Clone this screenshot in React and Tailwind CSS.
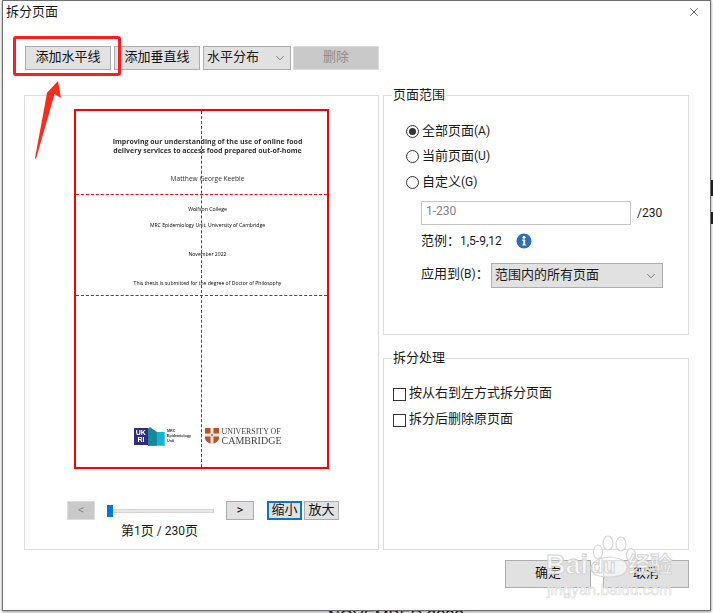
import { X, ChevronDown } from 'lucide-react';

const tones = {
  normal: 'border border-[#adadad] bg-[#e1e1e1] text-[#111]',
  disabled: 'border border-[#dcdcdc] bg-[#c9c9c9] text-[#8e8e8e]',
  focus: 'border-2 border-[#0078d7] bg-[#e1e1e1] text-[#111]',
};

function Btn({ children, tone = 'normal', className = '' }) {
  return (
    <button className={`flex items-center justify-center pb-[2px] text-[13px] ${tones[tone]} ${className}`}>
      {children}
    </button>
  );
}

function Radio({ checked, label, hotkey, className = '' }) {
  return (
    <div className={`flex h-5 items-center gap-[3px] ${className}`}>
      <span className="flex h-[13px] w-[13px] items-center justify-center rounded-full border border-[#333] bg-white">
        {checked && <span className="h-[7px] w-[7px] rounded-full bg-[#333]" />}
      </span>
      <span>{label}<span className="text-[12px]">{hotkey}</span></span>
    </div>
  );
}

function Check({ label, className = '' }) {
  return (
    <div className={`flex h-5 items-center gap-[3px] ${className}`}>
      <span className="h-[13px] w-[13px] border border-[#333] bg-white" />
      <span className="pb-[2px]">{label}</span>
    </div>
  );
}

function Group({ title, className = '', children }) {
  return (
    <div className={`border border-[#dcdcdc] ${className}`}>
      <div className="ml-2 -mt-[11px] h-5 w-fit bg-white px-px leading-5">{title}</div>
      {children}
    </div>
  );
}

// thesis title page shown in the preview
function PagePreview() {
  return (
    <div className="relative ml-[49px] h-[360px] w-[255px] border-2 border-[#ff0000]">
      <div className="flex h-full flex-col items-center pl-[12px] font-['Open_Sans',sans-serif] text-[#222] blur-[0.3px]">
        <div className="mt-[26px] text-center text-[7px] font-bold leading-[9px] text-[#333]">
          <div>Improving our understanding of the use of online food</div>
          <div>delivery services to access food prepared out-of-home</div>
        </div>
        <div className="mt-[19px] text-[6.6px] leading-[10px] text-[#333]">Matthew George Keeble</div>
        <div className="mt-[21px] text-[5.2px] font-medium leading-2 text-black">Wolfson College</div>
        <div className="mt-2 text-[5.1px] font-medium leading-2 text-black">MRC Epidemiology Unit, University of Cambridge</div>
        <div className="mt-[21px] text-[5.1px] font-medium leading-2 text-black">November 2022</div>
        <div className="mt-[21px] text-[5.1px] font-medium leading-2 text-black">This thesis is submitted for the degree of Doctor of Philosophy</div>

        <div className="mb-[21px] mt-auto flex h-[20px] w-[148px] items-center">
          <div className="flex h-[17px] w-[15px] flex-col items-center justify-center bg-[#2e2d7c] font-['Liberation_Sans',sans-serif] text-[7px] font-bold leading-[7px] text-white">
            <span>UK</span>
            <span>RI</span>
          </div>
          <svg width="17" height="19" viewBox="0 0 17 19" className="self-end">
            <path d="M0 2 L0 19 L17 19 L17 5 L9 5 L2 0 Z" fill="#11b5d3" />
            <path d="M0 2 L2 0 L9 5 L9 19 L0 19 Z" fill="#17879c" />
          </svg>
          <div className="ml-[2px] w-[30px] font-['Liberation_Sans',sans-serif] text-[3.7px] font-bold leading-[5px] text-[#333]">
            <div>MRC</div>
            <div className="whitespace-nowrap">Epidemiology</div>
            <div>Unit</div>
          </div>
          <svg width="14" height="16" viewBox="0 0 14 16" className="ml-[9px] shrink-0">
            <path d="M0 0 H14 V10 Q14 14 7 16 Q0 14 0 10 Z" fill="#b5532a" />
            <path d="M5.5 0 H8.5 V16 H5.5 Z M0 5.5 H14 V8.5 H0 Z" fill="#f2e3d6" />
            <path d="M6.2 6.2 H7.8 V7.8 H6.2 Z" fill="#c8342a" />
          </svg>
          <div className="ml-[2px] whitespace-nowrap font-['Liberation_Serif',serif] font-medium text-[#444]">
            <div className="text-[7.9px] leading-[9px]">UNIVERSITY OF</div>
            <div className="text-[10px] leading-[10px]">CAMBRIDGE</div>
          </div>
        </div>
      </div>

      {/* split guides */}
      <div className="absolute left-0 right-0 top-[83px] border-t border-dashed border-[#ff0000]" />
      <div className="absolute left-0 right-0 top-[184px] border-t border-dashed border-[#ff0000]" />
      <div className="absolute bottom-0 left-[125px] top-0 border-l border-dashed border-[#d01010]" />
    </div>
  );
}

function Watermark() {
  return (
    <div className="absolute left-[545px] top-[533px] z-20 h-[68px] w-[132px]">
      <svg width="132" height="68" viewBox="0 0 132 68" className="absolute left-0 top-0" fill="#ffffff" fillOpacity="0.6" stroke="#d6d6d6" strokeWidth="1.2">
        <ellipse cx="53" cy="19" rx="4.5" ry="7" />
        <ellipse cx="63" cy="10" rx="5" ry="7" />
        <ellipse cx="76" cy="11" rx="5" ry="7" />
        <ellipse cx="86" cy="22" rx="4.5" ry="6.5" />
        <path d="M46 36 Q46 26 65 24 Q84 26 82 36 Q80 44 64 44 Q47 44 46 36 Z" />
      </svg>
      <span className="absolute left-[1px] top-[17px] font-['Liberation_Sans',sans-serif] text-[27px] font-bold leading-[30px] text-white/75 [-webkit-text-stroke:1px_#d2d2d2]">Bai</span>
      <span className="absolute left-[46px] top-[22px] font-['Liberation_Sans',sans-serif] text-[20px] font-bold leading-[22px] text-white/75 [-webkit-text-stroke:1px_#d2d2d2]">du</span>
      <span className="absolute left-[83px] top-[16px] font-['Noto_Sans_CJK_SC',sans-serif] text-[22px] font-bold leading-[26px] text-white/75 [-webkit-text-stroke:1px_#d2d2d2]">经验</span>
      <span className="absolute left-[2px] top-[48px] font-['Liberation_Sans',sans-serif] text-[15.5px] leading-[18px] text-white/75 [-webkit-text-stroke:0.6px_#d8d8d8]">jingyan.baidu.com</span>
    </div>
  );
}

export default function App() {
  return (
    <div className="relative h-[613px] w-[713px] overflow-hidden bg-white font-['Roboto','Noto_Sans_CJK_SC',sans-serif] text-[13px] text-[#1a1a1a]">
      {/* dialog */}
      <div className="relative z-10 ml-[2px] h-[611px] w-[709px] border border-[#6f6f6f] bg-white shadow-[0_1px_3px_rgba(0,0,0,0.45)]">
        <div className="flex h-[23px] items-center justify-between pb-[2px] pl-[3px] pr-[9px]">
          <span className="text-[13px] leading-5">拆分页面</span>
          <X size={14} strokeWidth={1} className="text-black" />
        </div>

        <div className="ml-[22px] mt-[22px] flex h-6 items-stretch">
          <Btn className="w-[86px]">添加水平线</Btn>
          <Btn className="ml-[3px] w-[86px]">添加垂直线</Btn>
          <div className="ml-[3px] flex w-[88px] items-center justify-between border border-[#adadad] bg-[#e1e1e1] pb-[2px] pl-[3px] pr-[3px]">
            <span>水平分布</span>
            <ChevronDown size={14} strokeWidth={1} className="mt-[2px] text-[#333]" />
          </div>
          <Btn tone="disabled" className="ml-[2px] w-[86px]">删除</Btn>
        </div>

        <div className="ml-[21px] mt-[25px] flex h-[455px] gap-[4px]">
          {/* preview */}
          <div className="h-full w-[355px] border border-[#dcdcdc] pt-[13px]">
            <PagePreview />
            <div className="ml-[42px] mt-[32px] flex h-[19px] items-stretch">
              <Btn tone="disabled" className="w-7">&lt;</Btn>
              <div className="relative ml-3 flex w-[107px] items-center">
                <div className="h-[4px] w-full border border-[#d4d4d4] bg-[#e7e7e7]" />
                <div className="absolute left-0 top-[4px] h-3 w-[6px] bg-[#0078d7]" />
              </div>
              <Btn className="ml-3 w-7">&gt;</Btn>
              <Btn tone="focus" className="ml-[13px] w-[35px]">缩小</Btn>
              <Btn className="ml-[2px] w-[35px]">放大</Btn>
            </div>
            <div className="ml-[96px] mt-[1px] h-5 leading-5">第<span className="text-[12px]">1</span>页<span className="text-[12px]"> / 230</span>页</div>
          </div>

          <div className="flex w-[306px] flex-col gap-[23px]">
            <Group title="页面范围" className="h-[240px]">
              <div className="pl-[22px] pt-[16px]">
                <Radio checked label="全部页面" hotkey="(A)" />
                <Radio label="当前页面" hotkey="(U)" className="mt-[5px]" />
                <Radio label="自定义" hotkey="(G)" className="mt-[6px]" />
                <div className="ml-[15px] mt-[9px] flex items-center">
                  <div className="h-6 w-[210px] border border-[#c4c4c4] pl-1 text-[12px] leading-[18px] text-[#85808a]">1-230</div>
                  <span className="ml-[6px] text-[12px]">/230</span>
                </div>
                <div className="ml-[15px] mt-[6px] flex h-[20px] items-center">
                  <span className="w-[95px]">范例：<span className="text-[12px]">1,5-9,12</span></span>
                  <svg width="16" height="16" viewBox="0 0 16 16">
                    <circle cx="8" cy="8" r="7.5" fill="#2a6fb5" />
                    <circle cx="8" cy="4.2" r="1.5" fill="#fff" />
                    <path d="M6.2 6.6 H9.2 V11.4 H10.2 V12.6 H6.2 V11.4 H7.2 V7.8 H6.2 Z" fill="#fff" />
                  </svg>
                </div>
                <div className="ml-[15px] mt-[12px] flex items-center">
                  <span className="w-[70px] pb-[3px]">应用到<span className="text-[12px]">(B)</span>：</span>
                  <div className="flex h-[25px] w-[172px] items-center justify-between border border-[#adadad] bg-[#e1e1e1] pb-[2px] pl-[3px] pr-[4px]">
                    <span>范围内的所有页面</span>
                    <ChevronDown size={14} strokeWidth={1} className="mt-[2px] text-[#333]" />
                  </div>
                </div>
              </div>
            </Group>
            <Group title="拆分处理" className="h-[192px]">
              <div className="pl-[9px] pt-[16px]">
                <Check label="按从右到左方式拆分页面" />
                <Check label="拆分后删除原页面" className="mt-[6px]" />
              </div>
            </Group>
          </div>
        </div>

        <div className="mr-[21px] mt-[10px] flex justify-end gap-3">
          <Btn className="h-7 w-[86px]">确定</Btn>
          <Btn className="h-7 w-[86px]">取消</Btn>
        </div>
      </div>

      <Watermark />

      {/* callout drawn on the screenshot */}
      <div className="absolute left-[13px] top-[36px] z-20 h-[40px] w-[108px] rounded-[3px] border-[3px] border-[#ff1c1c]" />
      <svg width="40" height="90" viewBox="0 0 40 90" className="absolute left-[30px] top-[78px] z-20">
        <path d="M28 3 L31 20 L24.5 16 L6 81 L5 80 L17 15 L14 18 Z" fill="#ff2a17" />
      </svg>

      {/* page behind the dialog */}
      <div className="-mt-[7px] ml-[328px] font-['Liberation_Sans',sans-serif] text-[16.5px] leading-[24px] text-[#222]">NOVEMBER 2022</div>
      <div className="absolute right-0 top-[180px] h-4 w-[2px] bg-[#222]" />
      <div className="absolute right-0 top-[212px] h-3 w-[2px] bg-[#222]" />
    </div>
  );
}
